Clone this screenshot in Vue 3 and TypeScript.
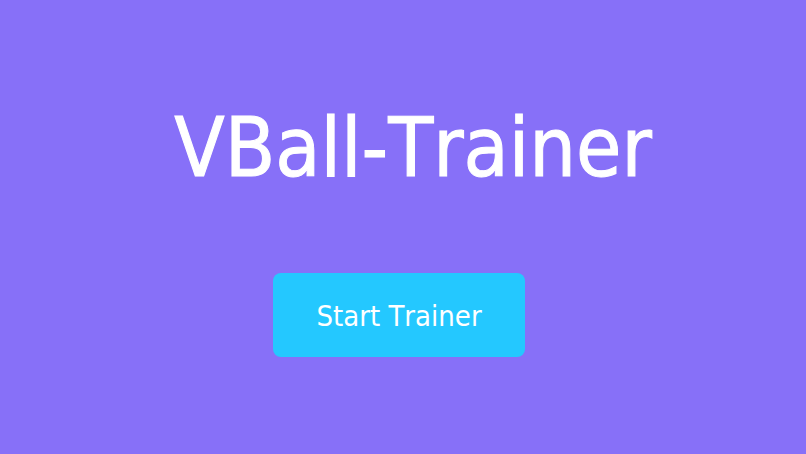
<script setup lang="ts">
import { ref } from 'vue'

const started = ref<boolean>(false)
</script>

<template>
  <main class="home">
    <h1 class="title">VBall-Trainer</h1>
    <button class="start" type="button" @click="started = true">Start Trainer</button>
  </main>
</template>

<style>
body {
  background: #8770f8;
}
</style>

<style scoped>
.home {
  box-sizing: border-box;
  min-height: 100vh;
  padding: 98px 0;
  display: flex;
  flex-direction: column;
  align-items: center;
  gap: 75px;
  font-family: "DejaVu Sans Condensed", "Noto Sans", sans-serif;
  font-kerning: none;
  color: #fff;
}

.title {
  margin: 0;
  padding-left: 20px;
  font-size: 82px;
  font-weight: 400;
  line-height: 100px;
  -webkit-text-stroke: 1px #fff;
}

.start {
  margin-right: 8px;
  padding: 23px 43px 21px;
  border: 0;
  border-radius: 8px;
  background: #24c8ff;
  color: #fff;
  font-family: inherit;
  font-kerning: inherit;
  font-size: 29px;
  line-height: 40px;
  cursor: pointer;
}
</style>
